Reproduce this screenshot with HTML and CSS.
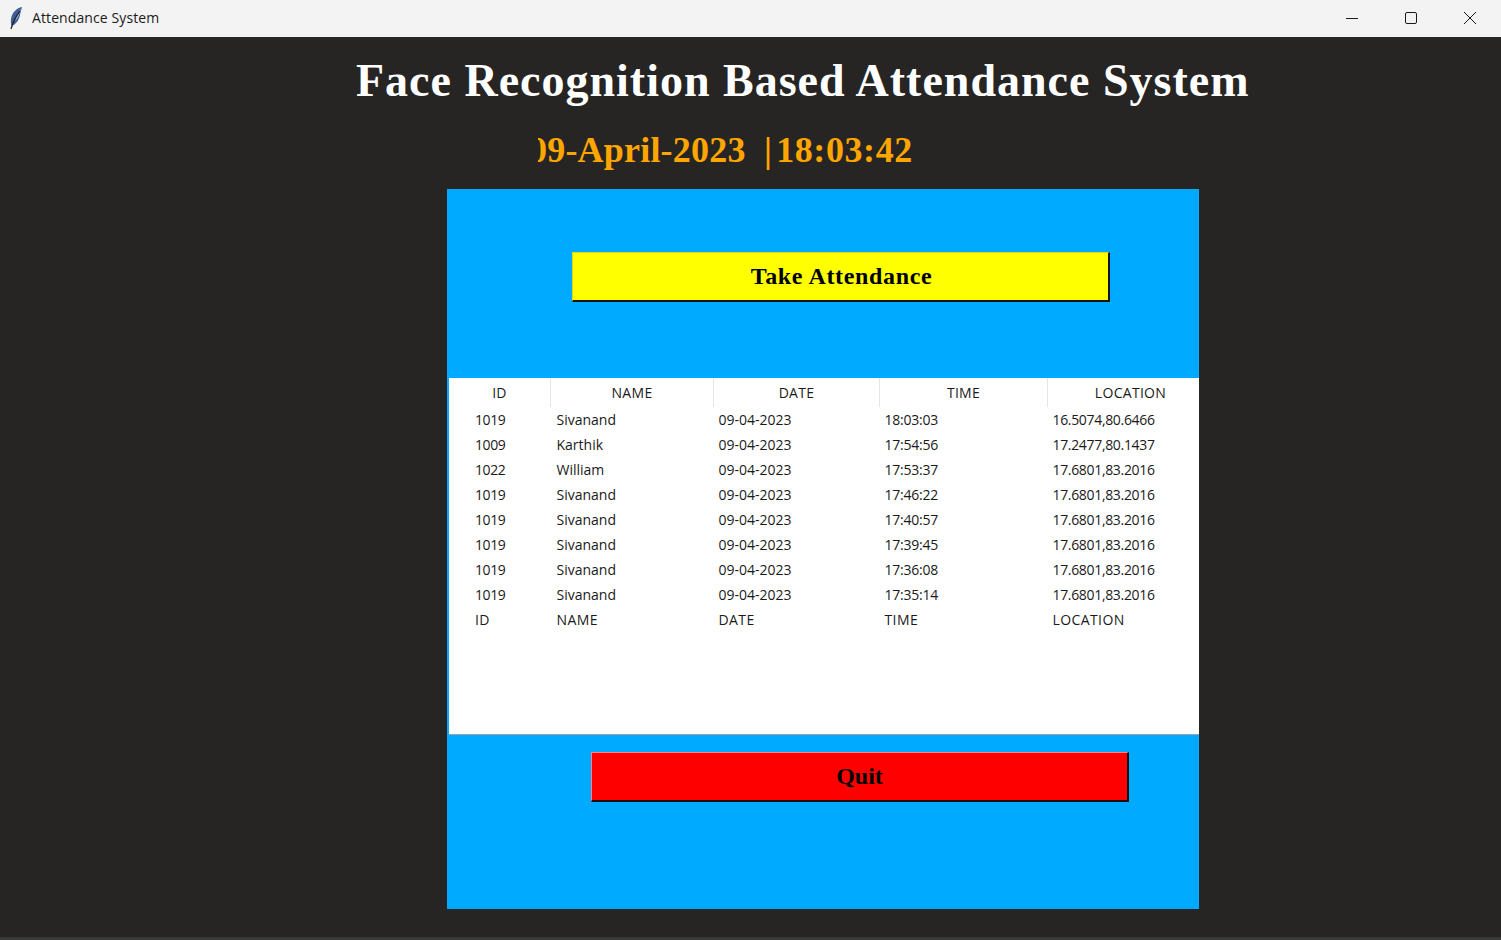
FILE: index.html
```html
<!DOCTYPE html>
<html lang="en">
<head>
    <meta charset="UTF-8">
    <title>Attendance System</title>
    <link rel="stylesheet" href="styles.css">
</head>
<body>
<div class="titlebar">
    <svg class="app-icon" width="16" height="24" viewBox="0 0 16 24">
        <path d="M14 1 C8 2 4 7 3 13 C2.5 16 3 19 4 20 C8 18 11 14 12 9 C12.6 6 13.4 3 14 1 Z" fill="#3f5f96"/>
        <path d="M13 3 C10 6 8 10 7 15 C9 13 11 9 12 6 Z" fill="#a9c4e6"/>
        <path d="M12 5 C8 10 5 16 3 23" fill="none" stroke="#26282e" stroke-width="1.3"/>
    </svg>
    <span class="app-name">Attendance System</span>
    <div class="win-buttons">
        <svg class="win-btn" width="12" height="12" viewBox="0 0 12 12"><path d="M0 6.5 H12" stroke="#1a1a1a" fill="none"/></svg>
        <svg class="win-btn" width="12" height="12" viewBox="0 0 12 12"><rect x="0.5" y="0.5" width="11" height="11" rx="1.5" stroke="#1a1a1a" fill="none"/></svg>
        <svg class="win-btn" width="12" height="12" viewBox="0 0 12 12"><path d="M0 0 L12 12 M12 0 L0 12" stroke="#1a1a1a" fill="none"/></svg>
    </div>
</div>

<div class="window">
    <h1 class="heading">Face Recognition Based Attendance System</h1>
    <div class="clock"><span class="clock-text">09-April-2023 &nbsp;<span class="clock-sep">|</span><span class="clock-time">18:03:42</span></span></div>

    <div class="panel">
        <button class="btn btn-take">Take Attendance</button>

        <table class="records">
            <thead>
                <tr><th>ID</th><th>NAME</th><th>DATE</th><th>TIME</th><th>LOCATION</th></tr>
            </thead>
            <tbody>
                <tr><td>1019</td><td>Sivanand</td><td>09-04-2023</td><td>18:03:03</td><td>16.5074,80.6466</td></tr>
                <tr><td>1009</td><td>Karthik</td><td>09-04-2023</td><td>17:54:56</td><td>17.2477,80.1437</td></tr>
                <tr><td>1022</td><td>William</td><td>09-04-2023</td><td>17:53:37</td><td>17.6801,83.2016</td></tr>
                <tr><td>1019</td><td>Sivanand</td><td>09-04-2023</td><td>17:46:22</td><td>17.6801,83.2016</td></tr>
                <tr><td>1019</td><td>Sivanand</td><td>09-04-2023</td><td>17:40:57</td><td>17.6801,83.2016</td></tr>
                <tr><td>1019</td><td>Sivanand</td><td>09-04-2023</td><td>17:39:45</td><td>17.6801,83.2016</td></tr>
                <tr><td>1019</td><td>Sivanand</td><td>09-04-2023</td><td>17:36:08</td><td>17.6801,83.2016</td></tr>
                <tr><td>1019</td><td>Sivanand</td><td>09-04-2023</td><td>17:35:14</td><td>17.6801,83.2016</td></tr>
                <tr class="caps"><td>ID</td><td>NAME</td><td>DATE</td><td>TIME</td><td>LOCATION</td></tr>
            </tbody>
        </table>

        <button class="btn btn-quit">Quit</button>
    </div>
</div>
</body>
</html>
```

FILE: styles.css
```css
html, body {
    margin: 0;
    padding: 0;
    height: 100%;
    overflow: hidden;
}

body {
    background-color: #262524;
    display: flex;
    flex-direction: column;
}

.titlebar {
    height: 37px;
    background-color: #f3f3f3;
    display: flex;
    align-items: center;
    flex-shrink: 0;
}

.app-icon {
    margin-left: 8px;
    margin-top: -2px;
}

.app-name {
    margin-left: 8px;
    margin-bottom: 2px;
    font-family: "Open Sans", sans-serif;
    font-size: 14px;
    letter-spacing: 0.1px;
    color: #1a1a1a;
}

.win-buttons {
    margin-left: auto;
    margin-right: 25px;
    margin-bottom: 2px;
    display: flex;
    gap: 47px;
}

.window {
    flex: 1;
    border-bottom: 3px solid #3a3a39;
    display: flex;
    flex-direction: column;
}

.heading {
    margin: 16px 0 0 356px;
    font-family: "Liberation Serif", serif;
    font-size: 46px;
    line-height: 56px;
    font-weight: bold;
    letter-spacing: 1px;
    color: #fff;
    white-space: nowrap;
}

.clock {
    margin: 21px 0 0 538px;
    width: 400px;
    height: 40px;
    overflow: hidden;
}

.clock-text {
    display: block;
    margin-left: -9px;
    font-family: "Liberation Serif", serif;
    font-size: 36px;
    line-height: 40px;
    font-weight: bold;
    letter-spacing: 0.2px;
    color: #ffa500;
    white-space: nowrap;
}

.clock-time {
    margin-left: 4px;
    letter-spacing: 0.6px;
}

.panel {
    margin: 19px 0 0 447px;
    width: 752px;
    height: 720px;
    background-color: #00aaff;
    display: flex;
    flex-direction: column;
}

.btn {
    width: 538px;
    height: 50px;
    padding: 0;
    border: 1px solid;
    border-bottom-width: 2px;
    border-right-width: 2px;
    font-family: "Liberation Serif", serif;
    font-size: 24px;
    font-weight: bold;
    color: #000;
    cursor: pointer;
}

.btn-take {
    margin: 63px 0 0 125px;
    padding-left: 2px;
    background-color: #ff0;
    border-color: #d8d820 #111 #111 #d8d820;
    letter-spacing: 0.65px;
}

.btn-quit {
    margin: 17px 0 0 144px;
    background-color: #f00;
    border-color: #ff8080 #111 #111 #ff8080;
}

.records {
    margin: 76px 0 0 2px;
    width: 750px;
    height: 357px;
    background-color: #fff;
    border-collapse: collapse;
    table-layout: fixed;
    border-bottom: 1px solid #a0a0a0;
    font-family: "Open Sans", sans-serif;
    font-size: 14px;
    color: #1a1a1a;
}

.records th {
    height: 29px;
    padding: 0;
    font-weight: normal;
    text-align: center;
    letter-spacing: 0.3px;
    border-right: 1px solid #e5e5e5;
}

.records th:last-child {
    padding-left: 14px;
    border-right: none;
}

.records th:nth-child(1) { width: 101px; }
.records th:nth-child(2) { width: 162px; }
.records th:nth-child(3) { width: 165px; }
.records th:nth-child(4) { width: 167px; }

.records tbody tr {
    height: 25px;
}

.records tbody tr:last-child {
    height: auto;
    vertical-align: top;
}

.records td {
    padding: 0 0 0 5px;
    line-height: 25px;
    white-space: nowrap;
}

.records td:first-child {
    padding-left: 26px;
    letter-spacing: -0.4px;
}

.records td:nth-child(2) {
    padding-left: 6px;
}

.records td:nth-child(4) {
    letter-spacing: -0.25px;
}

.records td:nth-child(5) {
    letter-spacing: -0.33px;
}

.records .caps td {
    letter-spacing: 0.4px;
}
```
